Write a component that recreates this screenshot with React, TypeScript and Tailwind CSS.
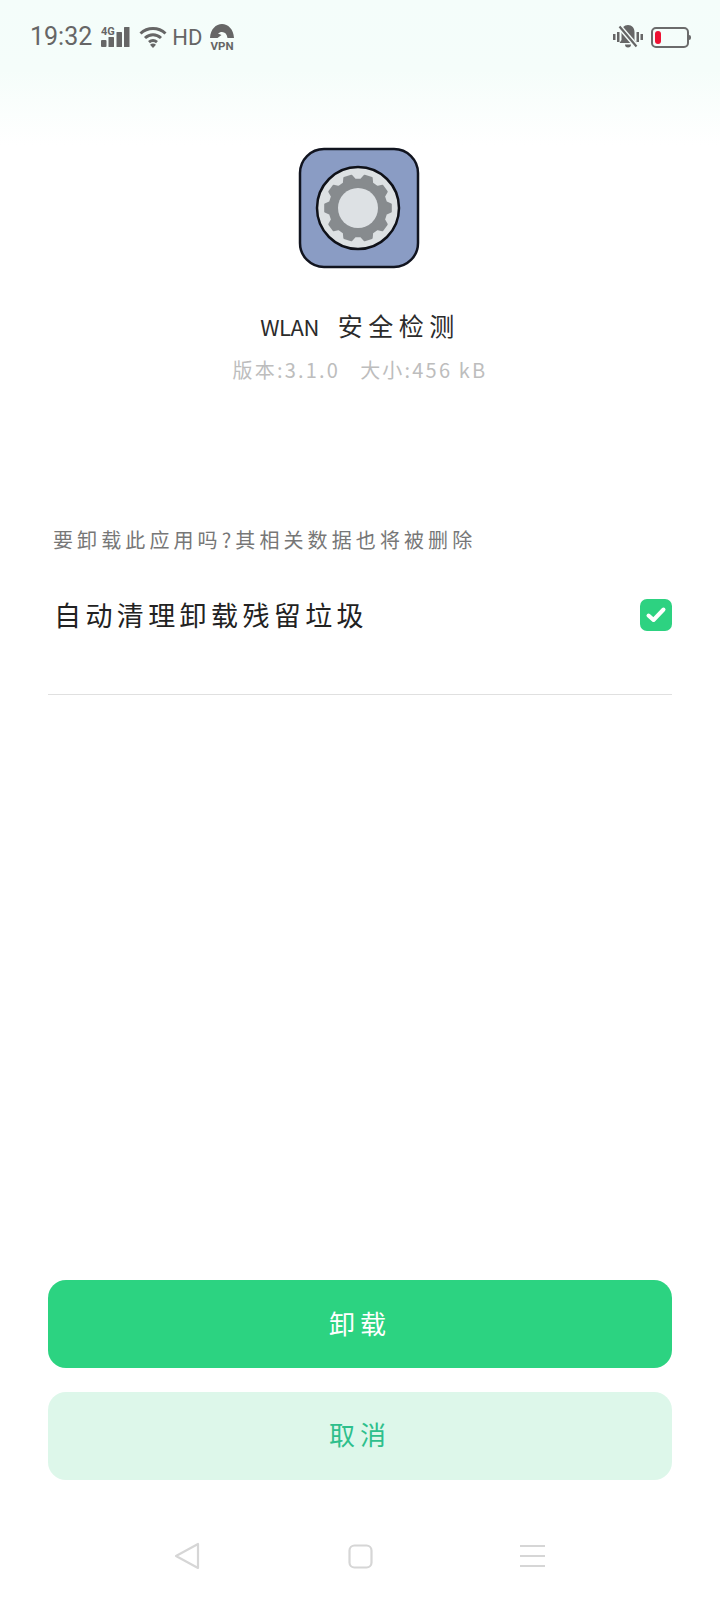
const gearPoints = () => {
  // 10 teeth, one pointing straight left/right
  const cx = 60;
  const cy = 60;
  const pts: string[] = [];
  for (let i = 0; i < 10; i++) {
    const a = (i * Math.PI * 2) / 10;
    const step = Math.PI / 10;
    const add = (r: number, t: number) =>
      pts.push(`${(cx + r * Math.cos(t)).toFixed(1)},${(cy + r * Math.sin(t)).toFixed(1)}`);
    add(28.5, a - step * 0.66);
    add(33, a - step * 0.36);
    add(33, a + step * 0.36);
    add(28.5, a + step * 0.66);
  }
  return pts.join(" ");
};

function AppIcon() {
  return (
    <svg width="122" height="122" viewBox="0 0 122 122" className="block">
      <rect x="2" y="2" width="118" height="118" rx="24" fill="#8a9cc4" stroke="#11141f" strokeWidth="2.5" />
      <g transform="translate(0 1)">
        <circle cx="60" cy="60" r="41" fill="#dde1e3" stroke="#0f1118" strokeWidth="2.5" />
        <polygon points={gearPoints()} fill="#878b8e" stroke="#878b8e" strokeWidth="2" strokeLinejoin="round" />
        <circle cx="60" cy="60" r="20" fill="#dde1e4" />
      </g>
    </svg>
  );
}

function Signal() {
  return (
    <svg width="29" height="22" viewBox="0 0 29 22" className="block">
      <text x="0" y="9" fontFamily="Roboto, sans-serif" fontWeight="700" fontSize="11" fill="#666">
        4G
      </text>
      <rect x="0" y="14" width="5.500" height="7" rx="1" fill="#666" />
      <rect x="7.500" y="11" width="5.500" height="10" rx="0.5" fill="#666" />
      <rect x="15.500" y="6" width="5.500" height="15" rx="0.5" fill="#666" />
      <rect x="23" y="1" width="5.500" height="20" rx="0.5" fill="#666" />
    </svg>
  );
}

function Wifi() {
  return (
    <svg width="28" height="22" viewBox="0 0 28 22" fill="none" stroke="#666" strokeWidth="3" className="block">
      <path d="M1.500 7.500C8.500 .8 19.500 .8 26.500 7.500" />
      <path d="M6 12C10.800 7.600 17.200 7.600 22 12" />
      <path d="M10 16.200C12.400 14.200 15.600 14.200 18 16.200" />
      <path d="M14 22l-3-3.200a4.400 4.400 0 0 1 6 0z" fill="#666" stroke="none" />
    </svg>
  );
}

function Vpn() {
  return (
    <svg width="26" height="28" viewBox="0 0 26 28" className="block">
      <path d="M1 15C1.500 6 7 1 13 1s11.500 5 12 14h-6.500C18 11 16 9 13 9c-1.500 0-3 .7-4 1.500l3.500 1.500L8.500 15z" fill="#666" />
      <text x="13" y="26.500" textAnchor="middle" fontFamily="Roboto, sans-serif" fontWeight="700" fontSize="11.500" fill="#666">
        VPN
      </text>
    </svg>
  );
}

function MutedBell() {
  return (
    <svg width="30" height="24" viewBox="0 0 30 24" className="block">
      <rect x="0" y="9" width="2.500" height="6" fill="#666" />
      <rect x="4" y="7" width="2.500" height="10" fill="#666" />
      <rect x="23.500" y="7" width="2.500" height="10" fill="#666" />
      <rect x="27.500" y="9" width="2.500" height="6" fill="#666" />
      <path d="M15 0c4 0 6.500 3 6.500 7v8l2 3H6.500l2-3V7c0-4 2.500-7 6.500-7zM12 19.500h6a3 3 0 0 1-6 0z" fill="#666" />
      <path d="M6 1l18 21" stroke="#f5fdfa" strokeWidth="5" />
      <path d="M6.500 1.500l17 20" stroke="#666" strokeWidth="2.200" />
    </svg>
  );
}

function Battery() {
  return (
    <div className="flex items-center">
      <div className="flex h-[21px] w-[38px] items-center rounded-[5px] border-2 border-[#6b6b6b] pl-[2px]">
        <div className="h-[13px] w-[6px] rounded-[3px] bg-[#ee1233]" />
      </div>
      <div className="h-[5px] w-[2px] rounded-r-sm bg-[#6b6b6b]" />
    </div>
  );
}

export default function App() {
  return (
    <div className="flex h-[1600px] w-[720px] flex-col bg-[linear-gradient(180deg,#f4fdfa_0px,#f5fdfa_70px,#ffffff_145px)] font-['Noto_Sans_CJK_SC','Noto_Sans',sans-serif]">
      <div className="flex h-[72px] items-center justify-between pl-[30px] pr-[29px] pt-[2px] font-['Roboto',sans-serif] text-[#666]">
        <div className="flex items-center">
          <span className="text-[25px]">19:32</span>
          <div className="ml-[9px]">
            <Signal />
          </div>
          <div className="ml-[9px]">
            <Wifi />
          </div>
          <span className="ml-[5px] text-[22px]">HD</span>
          <div className="ml-[7px]">
            <Vpn />
          </div>
        </div>
        <div className="flex items-center gap-[8px]">
          <MutedBell />
          <Battery />
        </div>
      </div>

      <div className="mt-[75px] flex justify-center pr-[2px]">
        <AppIcon />
      </div>

      <div className="mt-[39px] flex h-[36px] items-center justify-center text-[#2b2b2b]">
        <span className="text-[22px] tracking-[-0.5px]">WLAN</span>
        <span className="ml-[19px] text-[25px] tracking-[5.500px]">安全检测</span>
      </div>
      <div className="mt-[13px] flex h-[26px] items-center justify-center text-[20px] tracking-[2.200px] text-[#bdbdbd]">
        <span>版本:3.1.0</span>
        <span className="ml-[20px]">大小:456 kB</span>
      </div>

      <p className="mt-[143px] h-[28px] pl-[53px] text-[20px] leading-[28px] tracking-[4.100px] text-[#777]">
        要卸载此应用吗?其相关数据也将被删除
      </p>

      <div className="mt-[39px] flex h-[44px] items-center justify-between pl-[54px] pr-[48px]">
        <span className="text-[27px] tracking-[4.400px] text-[#222]">自动清理卸载残留垃圾</span>
        <div className="flex h-[32px] w-[32px] items-center justify-center rounded-[7px] bg-[#2dd281]">
          <svg width="24" height="24" viewBox="0 0 24 24" fill="none" stroke="#fff" strokeWidth="4" strokeLinecap="round" strokeLinejoin="round">
            <path d="M4.500 12.500l5 4.500 10-10.500" />
          </svg>
        </div>
      </div>

      <div className="mx-[48px] mt-[57px] h-px bg-[#e0e0e0]" />

      <div className="mt-auto flex flex-col gap-[24px] px-[48px]">
        <button type="button" className="h-[88px] rounded-[18px] bg-[#2cd381] pb-[3px] text-[26px] tracking-[5px] text-white">
          卸载
        </button>
        <button type="button" className="h-[88px] rounded-[18px] bg-[#ddf7ea] pb-[6px] text-[26px] tracking-[5px] text-[#2ebf8c]">
          取消
        </button>
      </div>

      <div className="mt-[63px] mb-[31px] flex h-[26px] items-center justify-between pl-[174px] pr-[175px]">
        <svg width="26" height="28" viewBox="0 0 26 28" fill="none" stroke="#d6d6d6" strokeWidth="2.200" strokeLinejoin="round" className="block">
          <path d="M24 2v24L2 14z" />
        </svg>
        <svg width="25" height="25" viewBox="0 0 25 25" fill="none" stroke="#d6d6d6" strokeWidth="2.200" className="block">
          <rect x="1.500" y="1.500" width="22" height="22" rx="5" />
        </svg>
        <svg width="25" height="24" viewBox="0 0 25 24" fill="none" stroke="#d6d6d6" strokeWidth="2" className="block">
          <path d="M0 2h25M0 12h25M0 22h25" />
        </svg>
      </div>
    </div>
  );
}
